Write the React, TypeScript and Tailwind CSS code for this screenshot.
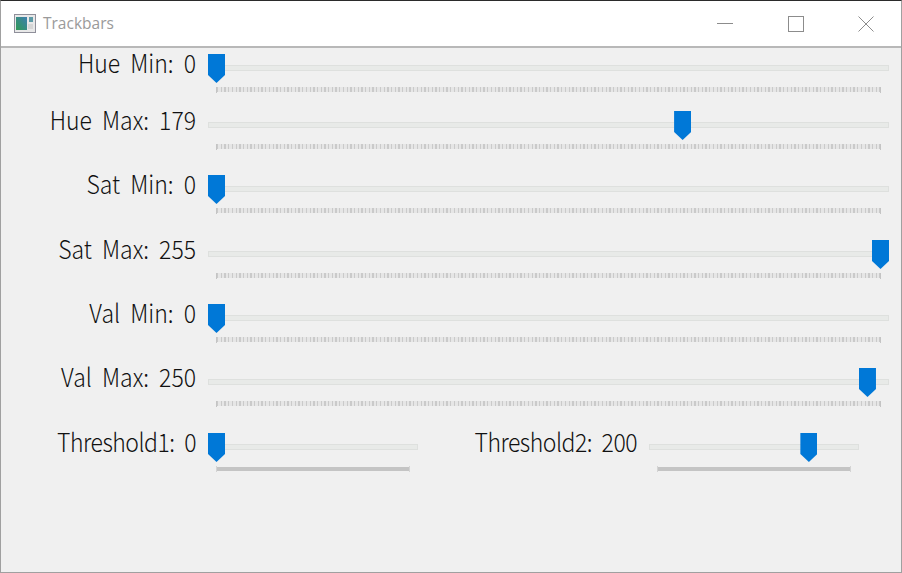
import React from "react";

const W = 17;

function Slider({ value, width, dense }: { value: number; width: number; dense?: boolean }) {
  const left = (value / 255) * (width - W);
  return (
    <div className="relative h-full shrink-0" style={{ width }}>
      <div className="absolute left-0 right-0 top-[17px] h-[6px] border border-[#dee0de] bg-[#e8eae8]" />
      <div
        className="absolute top-[6px] h-[29px] w-[17px] bg-[#0078d7] [clip-path:polygon(0_0,100%_0,100%_72%,50%_100%,0_72%)]"
        style={{ left }}
      />
      {dense ? (
        <div className="absolute left-[8px] right-[8px] top-[39px] h-[6px] border-x border-[#d4d4d4]">
          <div className="mt-[1px] h-[4px] bg-[#c4c4c4]" />
        </div>
      ) : (
        <div className="absolute left-[8px] right-[8px] top-[39px] h-[6px] border-x border-[#c4c4c4]">
          <div className="h-[5px] bg-[repeating-linear-gradient(90deg,#cacaca_0,#cacaca_1.3px,#e6e6e6_1.3px,#e6e6e6_3.7px)]" />
        </div>
      )}
    </div>
  );
}

function Labeled({ label, value, width, dense }: { label: string; value: number; width: number; dense?: boolean }) {
  return (
    <div className="flex h-full items-start gap-[12px]">
      <div
        className={
          dense
            ? "mt-[-1px] w-[195px] shrink-0 origin-right whitespace-pre text-right font-['Noto_Sans_CJK_JP',sans-serif] text-[23px] font-light leading-[30px] tracking-[-0.5px] text-[#111111] [word-spacing:5px] [transform:scaleY(1.1)]"
            : "mt-[-1px] w-[195px] shrink-0 origin-right whitespace-pre text-right font-['Noto_Sans_CJK_JP',sans-serif] text-[23px] font-light leading-[30px] tracking-[0px] text-[#111111] [word-spacing:5px] [transform:scaleY(1.1)]"
        }
      >
        {label}: {value}
      </div>
      <Slider value={value} width={width} dense={dense} />
    </div>
  );
}

const rows = [
  { label: "Hue Min", value: 0, h: "h-[57px]" },
  { label: "Hue Max", value: 179, h: "h-[64px]" },
  { label: "Sat Min", value: 0, h: "h-[65px]" },
  { label: "Sat Max", value: 255, h: "h-[64px]" },
  { label: "Val Min", value: 0, h: "h-[64px]" },
  { label: "Val Max", value: 250, h: "h-[65px]" },
];

export default function App() {
  return (
    <div className="relative flex h-[573px] w-[902px] flex-col overflow-hidden border border-b-[#a0a0a0] border-l-[#a0a0a0] border-r-[#a0a0a0] border-t-[#2b2b2b] bg-[#f0f0f0]">
      <div className="absolute left-[-1px] top-[-1px] h-[350px] w-px bg-[#3a3a3a]" />
      <div className="absolute left-[-1px] top-[481px] h-[16px] w-px bg-[#3a3a3a]" />
      <div className="flex h-[47px] shrink-0 items-center border-b-2 border-[#b8b8b8] bg-white">
        <svg width="22" height="19" viewBox="0 0 22 19" className="ml-[13px]">
          <rect x="0.5" y="0.5" width="21" height="18" fill="#e8e8e8" stroke="#8f8f9a" />
          <defs>
            <linearGradient id="g" x1="1" y1="0" x2="0" y2="1">
              <stop offset="0" stopColor="#3f7fb0" />
              <stop offset="1" stopColor="#2f9a55" />
            </linearGradient>
          </defs>
          <rect x="2" y="3" width="11" height="13" fill="url(#g)" />
          <rect x="15" y="3" width="4" height="5" fill="#5d9aa6" />
          <rect x="14" y="10" width="5" height="5" fill="#d5d5d5" />
        </svg>
        <span className="ml-[7px] font-['Open_Sans',sans-serif] text-[15.5px] text-[#9a9a9a]">Trackbars</span>
        <div className="ml-auto flex h-full items-center">
          <svg width="17" height="2" className="mr-[54px]"><rect width="16" height="1" fill="#8c8c8c" /></svg>
          <svg width="16" height="16" className="mr-[54px]"><rect x="0.5" y="0.5" width="15" height="15" fill="none" stroke="#8c8c8c" /></svg>
          <svg width="16" height="16" className="mr-[27px]"><path d="M0.5 0.5L15.5 15.5M15.5 0.5L0.5 15.5" stroke="#8c8c8c" fill="none" /></svg>
        </div>
      </div>
      <div className="flex flex-1 flex-col">
        {rows.map((r) => (
          <div key={r.label} className={r.h}>
            <Labeled label={r.label} value={r.value} width={681} />
          </div>
        ))}
        <div className="flex h-[65px]">
          <div className="w-[441px] shrink-0">
            <Labeled label="Threshold1" value={0} width={210} dense />
          </div>
          <div className="w-[441px] shrink-0">
            <Labeled label="Threshold2" value={200} width={210} dense />
          </div>
        </div>
      </div>
    </div>
  );
}
